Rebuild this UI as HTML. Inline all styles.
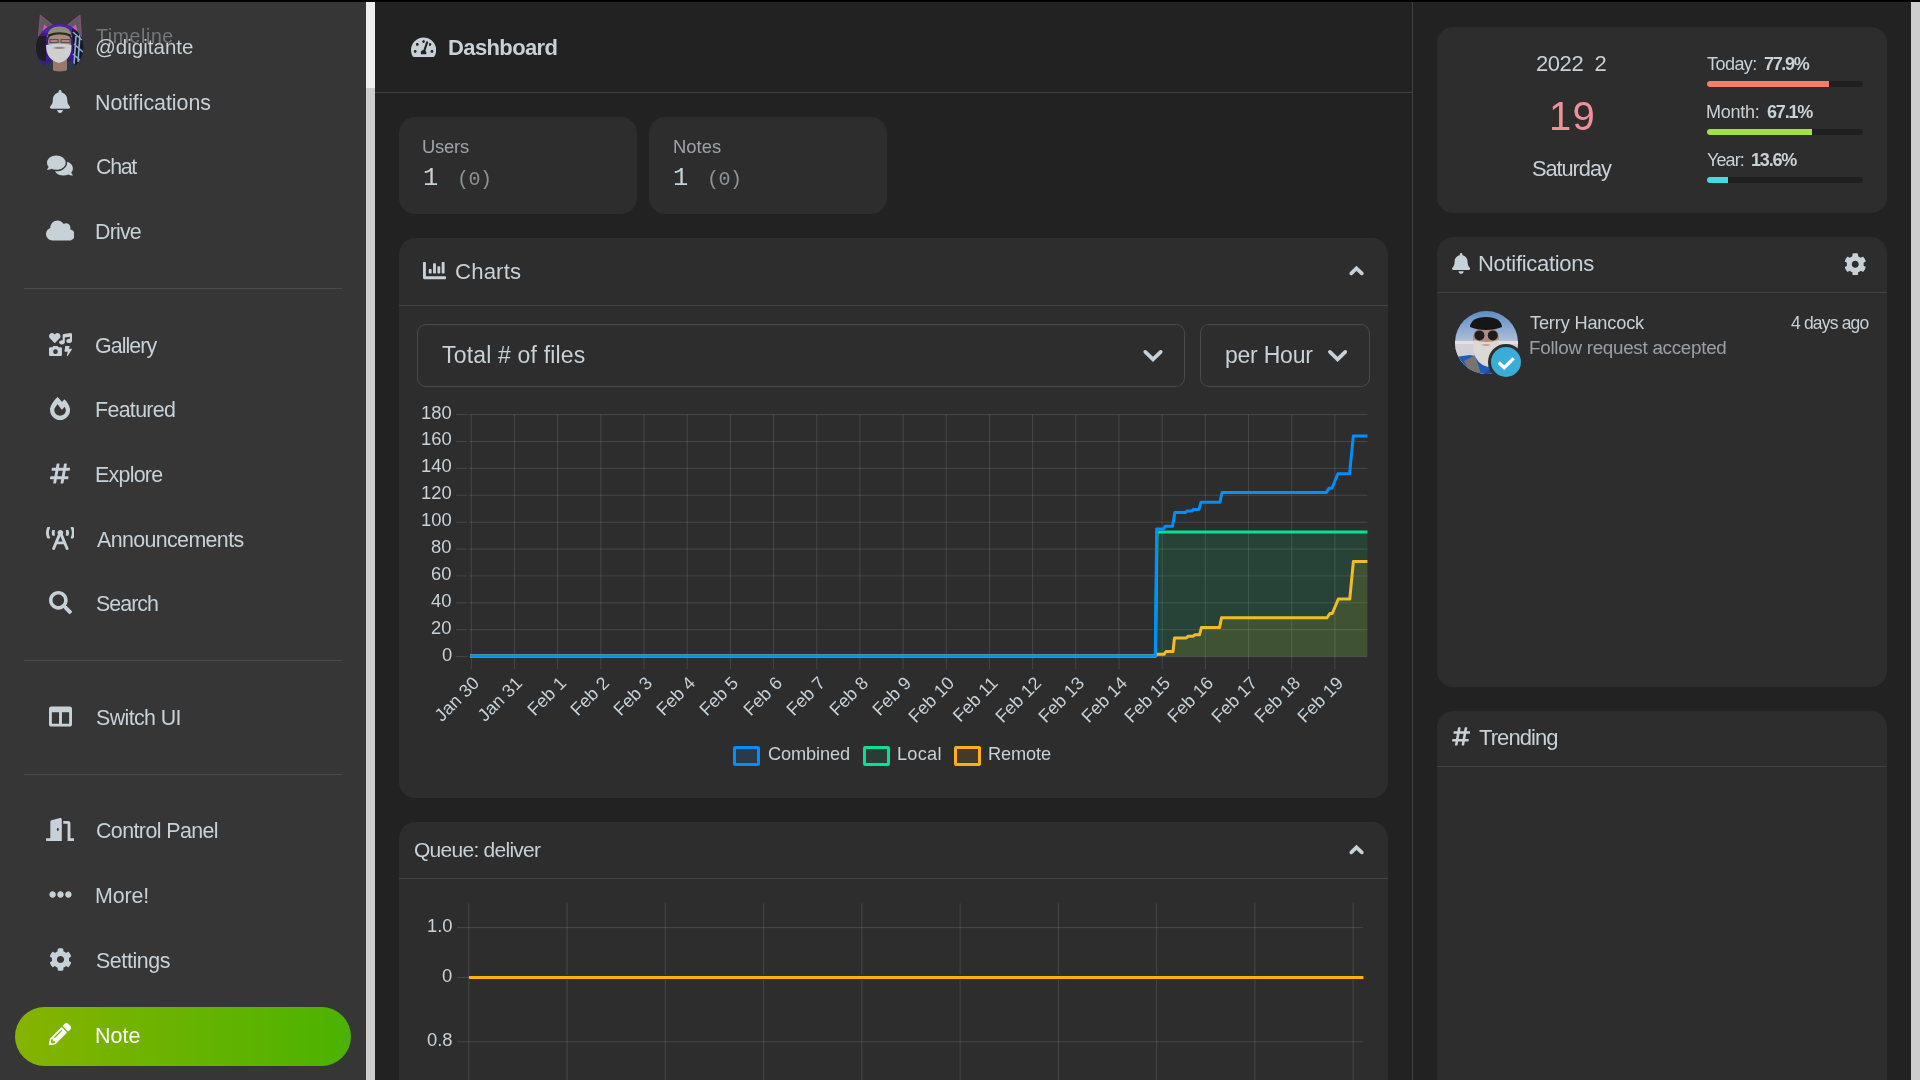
<!DOCTYPE html>
<html><head><meta charset="utf-8">
<style>
*{box-sizing:border-box;margin:0;padding:0}
html,body{width:1920px;height:1080px;overflow:hidden;background:#222;font-family:"Liberation Sans",sans-serif;color:#c7d1d8}
.tx{position:absolute;white-space:nowrap;will-change:transform}
.rx{position:absolute;white-space:nowrap}
.r{position:absolute}
</style></head><body>

<div class="r" style="left:0;top:0;width:366px;height:1080px;background:#363636"></div>
<div class="r" style="left:375px;top:0;width:1545px;height:1080px;background:#222222"></div>
<div class="tx" style="left:96.22px;top:25px;font-size:19.50px;line-height:22px;color:rgba(199,209,216,0.42);font-weight:normal;letter-spacing:0.607px;font-family:'Liberation Sans',sans-serif;">Timeline</div>
<svg class="ic" style="position:absolute;left:49.94px;top:89.90px;width:20.12px;height:23.00px;" viewBox="0 0 448 512"><path fill="#c7d1d8" d="M224 512c35.32 0 63.97-28.65 63.97-64H160.03c0 35.35 28.65 64 63.97 64zm215.39-149.71c-19.32-20.76-55.47-51.99-55.47-154.29 0-77.7-54.48-139.9-127.94-155.16V32c0-17.67-14.32-32-31.98-32s-31.98 14.33-31.98 32v20.84C118.56 68.1 64.08 130.3 64.08 208c0 102.3-36.15 133.53-55.470 154.29-6 6.45-8.66 14.16-8.61 21.71.11 16.4 12.98 32 32.1 32h383.8c19.12 0 32-15.6 32.1-32 .05-7.55-2.61-15.27-8.61-21.710z"/></svg>
<div class="tx" style="left:94.95px;top:91px;font-size:21.40px;line-height:24px;color:#c7d1d8;font-weight:normal;letter-spacing:-0.048px;font-family:'Liberation Sans',sans-serif;">Notifications</div>
<svg class="ic" style="position:absolute;left:47.06px;top:154.20px;width:25.88px;height:23.00px;" viewBox="0 0 576 512"><path fill="#c7d1d8" d="M416 192c0-88.4-93.1-160-208-160S0 103.6 0 192c0 34.3 14.1 65.9 38 92-13.4 30.2-35.5 54.2-35.8 54.5-2.2 2.3-2.8 5.7-1.5 8.7S4.8 352 8 352c36.6 0 66.9-12.3 88.7-25 32.2 15.7 70.3 25 111.3 25 114.9 0 208-71.6 208-160zm122 220c23.9-26 38-57.7 38-92 0-66.9-53.5-124.2-129.3-148.1.9 6.6 1.3 13.3 1.3 20.1 0 105.9-107.7 192-240 192-10.8 0-21.3-.8-31.7-1.9C207.8 439.6 281.8 480 368 480c41 0 79.1-9.2 111.3-25 21.8 12.7 52.1 25 88.7 25 3.2 0 6.1-1.9 7.3-4.8 1.3-2.9.7-6.3-1.5-8.7-.3-.3-22.4-24.2-35.8-54.5z"/></svg>
<div class="tx" style="left:95.88px;top:155px;font-size:21.40px;line-height:24px;color:#c7d1d8;font-weight:normal;letter-spacing:-1.292px;font-family:'Liberation Sans',sans-serif;">Chat</div>
<svg class="ic" style="position:absolute;left:45.62px;top:218.90px;width:28.75px;height:23.00px;" viewBox="0 0 640 512"><path fill="#c7d1d8" d="M537.6 226.6c4.1-10.7 6.4-22.4 6.4-34.6 0-53-43-96-96-96-19.7 0-38.1 6-53.3 16.2C367 64.2 315.3 32 256 32c-88.4 0-160 71.6-160 160 0 2.7.1 5.4.2 8.1C40.2 219.8 0 273.2 0 336c0 79.5 64.5 144 144 144h368c70.7 0 128-57.3 128-128 0-61.9-44-113.6-102.4-125.4z"/></svg>
<div class="tx" style="left:95.25px;top:220px;font-size:21.40px;line-height:24px;color:#c7d1d8;font-weight:normal;letter-spacing:-0.812px;font-family:'Liberation Sans',sans-serif;">Drive</div>
<svg class="ic" style="position:absolute;left:48.50px;top:333.20px;width:23.00px;height:23.00px;" viewBox="0 0 512 512"><path fill="#c7d1d8" d="M116.65 219.35a15.68 15.68 0 0 0 22.65 0l96.75-99.83c28.15-29 26.5-77.1-4.91-103.88C203.75-7.7 163-3.5 137.86 22.44L128 32.58l-9.85-10.14C93.05-3.5 52.25-7.7 24.75 15.64c-31.41 26.78-33 74.85-5 103.88zm143.92 100.49h-48l-7.08-14.24a27.39 27.39 0 0 0-25.66-17.78h-71.71a27.39 27.39 0 0 0-25.66 17.78l-7 14.24h-48A27.45 27.45 0 0 0 0 347.3v137.25A27.44 27.44 0 0 0 27.43 512h233.14A27.45 27.45 0 0 0 288 484.55V347.3a27.45 27.45 0 0 0-27.43-27.46zM144 468a52 52 0 1 1 52-52 52 52 0 0 1-52 52zm355.4-115.9h-60.58l22.36-50.75c2.1-6.65-3.93-13.21-12.18-13.21h-75.59c-6.3 0-11.66 3.9-12.5 9.1l-16.8 106.930c-1 6.3 4.88 11.89 12.5 11.89h62.31l-24.2 83c-1.89 6.65 4.2 12.9 12.23 12.9a13.26 13.26 0 0 0 10.92-5.25l92.4-138.91c4.88-6.91-1.16-15.7-10.87-15.7zM478.08.33L329.51 23.17C314.87 25.42 304 38.92 304 54.83V161.6a83.25 83.25 0 0 0-16-1.7c-35.35 0-64 21.48-64 48s28.65 48 64 48c35.2 0 63.73-21.32 64-47.66V99.66l112-17.22v47.18a83.25 83.25 0 0 0-16-1.7c-35.35 0-64 21.48-64 48s28.65 48 64 48c35.2 0 63.73-21.32 64-47.66V32c0-19.48-16-34.42-33.92-31.67z"/></svg>
<div class="tx" style="left:95.30px;top:334px;font-size:21.40px;line-height:24px;color:#c7d1d8;font-weight:normal;letter-spacing:-0.921px;font-family:'Liberation Sans',sans-serif;">Gallery</div>
<svg class="ic" style="position:absolute;left:49.94px;top:397.20px;width:20.12px;height:23.00px;" viewBox="0 0 448 512"><path fill="#c7d1d8" d="M323.56 51.2c-20.8 19.3-39.58 39.59-56.22 59.97C240.08 73.62 206.28 35.53 168 0 69.74 91.17 0 209.96 0 281.6 0 408.85 100.29 512 224 512s224-103.15 224-230.4c0-53.27-51.98-163.14-124.44-230.4zm-19.47 340.65C282.43 407.01 255.72 416 226.86 416 154.71 416 96 368.26 96 290.75c0-38.61 24.31-72.63 72.79-130.75 6.93 7.98 98.83 125.34 98.83 125.34l58.63-66.88c4.14 6.85 7.91 13.55 11.27 19.97 27.35 52.19 15.81 118.97-33.43 153.42z"/></svg>
<div class="tx" style="left:94.95px;top:398px;font-size:21.40px;line-height:24px;color:#c7d1d8;font-weight:normal;letter-spacing:-0.668px;font-family:'Liberation Sans',sans-serif;">Featured</div>
<svg class="ic" style="position:absolute;left:49.94px;top:461.90px;width:20.12px;height:23.00px;" viewBox="0 0 448 512"><path fill="#c7d1d8" d="M440.667 182.109l7.143-40c1.313-7.355-4.342-14.109-11.813-14.109h-74.81l14.61-81.891C377.109 38.754 371.453 32 363.983 32h-40.632a12 12 0 0 0-11.813 9.891L296.175 128H197.54l14.61-81.891C213.463 38.754 207.807 32 200.336 32h-40.632a12 12 0 0 0-11.813 9.891L132.528 128H53.432a12 12 0 0 0-11.813 9.891l-7.143 40C33.163 185.246 38.818 192 46.289 192h74.81L98.242 320H19.146a12 12 0 0 0-11.813 9.891l-7.143 40C-1.123 377.246 4.532 384 12.003 384h74.81L72.203 465.891C70.89 473.246 76.546 480 84.016 480h40.632a12 12 0 0 0 11.813-9.891L151.825 384h98.634l-14.61 81.891C234.537 473.246 240.193 480 247.663 480h40.632a12 12 0 0 0 11.813-9.891L315.472 384h79.096a12 12 0 0 0 11.813-9.891l7.143-40c1.313-7.355-4.342-14.109-11.813-14.109h-74.81l22.857-128h79.096a12 12 0 0 0 11.813-9.891zM261.889 320h-98.634l22.857-128h98.634l-22.857 128z"/></svg>
<div class="tx" style="left:94.95px;top:463px;font-size:21.40px;line-height:24px;color:#c7d1d8;font-weight:normal;letter-spacing:-0.729px;font-family:'Liberation Sans',sans-serif;">Explore</div>
<svg class="ic" style="position:absolute;left:45.62px;top:526.80px;width:28.75px;height:23.00px;" viewBox="0 0 640 512"><path fill="#c7d1d8" d="M150.94 192h33.730c11.01 0 18.61-10.83 14.86-21.18-4.93-13.58-7.55-27.98-7.55-42.82s2.62-29.24 7.55-42.82C203.29 74.83 195.68 64 184.67 64h-33.73c-7.01 0-13.46 4.49-15.41 11.23C130.64 92.21 128 109.88 128 128c0 18.12 2.64 35.79 7.54 52.76 1.94 6.74 8.39 11.24 15.4 11.24zM89.92 23.34C95.56 12.72 87.970 0 75.96 0H40.63c-6.27 0-12.14 3.59-14.74 9.31C9.4 45.54 0 85.65 0 128c0 24.75 3.12 68.33 26.69 118.86 2.62 5.63 8.42 9.14 14.61 9.14h34.84c12.02 0 19.61-12.74 13.95-23.37-49.78-93.32-16.71-178.15-.17-209.29zM614.06 9.29C611.46 3.58 605.6 0 599.33 0h-35.42c-11.98 0-19.66 12.66-14.02 23.25 18.27 34.29 48.42 119.42.28 209.23-5.72 10.68 1.8 23.52 13.91 23.52h35.23c6.27 0 12.13-3.58 14.73-9.29C630.57 210.48 640 170.36 640 128s-9.42-82.48-25.940-118.71zM489.06 64h-33.73c-11.01 0-18.61 10.83-14.86 21.18 4.93 13.58 7.55 27.98 7.550 42.82s-2.62 29.24-7.55 42.82c-3.76 10.35 3.85 21.18 14.86 21.18h33.73c7.02 0 13.46-4.49 15.41-11.24 4.9-16.97 7.53-34.64 7.53-52.76 0-18.12-2.64-35.79-7.54-52.76-1.94-6.75-8.39-11.24-15.4-11.24zm-116.3 100.12c7.05-10.29 11.2-22.71 11.2-36.12 0-35.35-28.63-64-63.96-64-35.32 0-63.96 28.65-63.96 64 0 13.41 4.15 25.83 11.2 36.12l-130.5 313.41c-3.4 8.15.46 17.52 8.61 20.92l29.51 12.31c8.15 3.4 17.52-.46 20.91-8.61L244.96 384h150.07l49.2 118.15c3.4 8.16 12.76 12.01 20.91 8.61l29.51-12.31c8.15-3.4 12-12.77 8.61-20.92l-130.5-313.41zM271.62 320L320 203.81 368.38 320h-96.76z"/></svg>
<div class="tx" style="left:96.70px;top:528px;font-size:21.40px;line-height:24px;color:#c7d1d8;font-weight:normal;letter-spacing:-0.619px;font-family:'Liberation Sans',sans-serif;">Announcements</div>
<svg class="ic" style="position:absolute;left:48.50px;top:590.90px;width:23.00px;height:23.00px;" viewBox="0 0 512 512"><path fill="#c7d1d8" d="M505 442.7L405.3 343c-4.5-4.5-10.6-7-17-7H372c27.6-35.3 44-79.7 44-128C416 93.1 322.9 0 208 0S0 93.1 0 208s93.1 208 208 208c48.3 0 92.7-16.4 128-44v16.3c0 6.4 2.5 12.5 7 17l99.7 99.7c9.4 9.4 24.6 9.4 33.9 0l28.3-28.3c9.4-9.4 9.4-24.6.1-34zM208 336c-70.7 0-128-57.2-128-128 0-70.7 57.2-128 128-128 70.7 0 128 57.2 128 128 0 70.7-57.2 128-128 128z"/></svg>
<div class="tx" style="left:95.70px;top:592px;font-size:21.40px;line-height:24px;color:#c7d1d8;font-weight:normal;letter-spacing:-0.955px;font-family:'Liberation Sans',sans-serif;">Search</div>
<svg class="ic" style="position:absolute;left:48.50px;top:705.10px;width:23.00px;height:23.00px;" viewBox="0 0 512 512"><path fill="#c7d1d8" d="M464 32H48C21.49 32 0 53.49 0 80v352c0 26.51 21.49 48 48 48h416c26.51 0 48-21.49 48-48V80c0-26.51-21.49-48-48-48zM224 416H64V160h160v256zm224 0H288V160h160v256z"/></svg>
<div class="tx" style="left:95.70px;top:706px;font-size:21.40px;line-height:24px;color:#c7d1d8;font-weight:normal;letter-spacing:-0.597px;font-family:'Liberation Sans',sans-serif;">Switch UI</div>
<svg class="ic" style="position:absolute;left:45.62px;top:818.10px;width:28.75px;height:23.00px;" viewBox="0 0 640 512"><path fill="#c7d1d8" d="M624 448h-80V113.45C544 86.19 522.47 64 496 64H384v64h96v384h144c8.84 0 16-7.16 16-16v-32c0-8.84-7.16-16-16-16zM312.24 1.01l-192 49.74C105.99 54.44 96 67.7 96 82.92V448H16c-8.84 0-16 7.16-16 16v32c0 8.84 7.16 16 16 16h336V33.18c0-21.58-19.56-37.41-39.76-32.17zM264 288c-13.25 0-24-14.33-24-32s10.75-32 24-32 24 14.33 24 32-10.75 32-24 32z"/></svg>
<div class="tx" style="left:95.58px;top:819px;font-size:21.40px;line-height:24px;color:#c7d1d8;font-weight:normal;letter-spacing:-0.583px;font-family:'Liberation Sans',sans-serif;">Control Panel</div>
<svg class="ic" style="position:absolute;left:48.50px;top:882.80px;width:23.00px;height:23.00px;" viewBox="0 0 512 512"><path fill="#c7d1d8" d="M328 256c0 39.8-32.2 72-72 72s-72-32.2-72-72 32.2-72 72-72 72 32.2 72 72zm104-72c-39.8 0-72 32.2-72 72s32.2 72 72 72 72-32.2 72-72-32.2-72-72-72zm-352 0c-39.8 0-72 32.2-72 72s32.2 72 72 72 72-32.2 72-72-32.2-72-72-72z"/></svg>
<div class="tx" style="left:94.95px;top:884px;font-size:21.40px;line-height:24px;color:#c7d1d8;font-weight:normal;letter-spacing:-0.100px;font-family:'Liberation Sans',sans-serif;">More!</div>
<svg class="ic" style="position:absolute;left:48.50px;top:947.90px;width:23.00px;height:23.00px;" viewBox="0 0 512 512"><path fill="#c7d1d8" d="M487.4 315.7l-42.6-24.6c4.3-23.2 4.3-47 0-70.2l42.6-24.6c4.9-2.8 7.1-8.6 5.5-14-11.1-35.6-30-67.8-54.7-94.6-3.8-4.1-10-5.1-14.8-2.3L380.8 110c-17.9-15.4-38.5-27.3-60.8-35.1V25.8c0-5.6-3.9-10.5-9.4-11.7-36.7-8.2-74.3-7.8-109.2 0-5.5 1.2-9.4 6.1-9.4 11.7V75c-22.2 7.9-42.8 19.8-60.8 35.1L88.7 85.5c-4.9-2.8-11-1.9-14.8 2.3-24.7 26.7-43.6 58.9-54.7 94.6-1.7 5.4.6 11.2 5.5 14L67.3 221c-4.3 23.2-4.3 47 0 70.2l-42.6 24.6c-4.9 2.8-7.1 8.6-5.5 14 11.1 35.6 30 67.8 54.7 94.6 3.8 4.1 10 5.1 14.8 2.3l42.6-24.6c17.9 15.4 38.5 27.3 60.8 35.1v49.2c0 5.6 3.9 10.5 9.4 11.7 36.7 8.2 74.3 7.8 109.2 0 5.5-1.2 9.4-6.1 9.4-11.7v-49.2c22.2-7.9 42.8-19.8 60.8-35.1l42.6 24.6c4.9 2.8 11 1.9 14.8-2.3 24.7-26.7 43.6-58.9 54.7-94.6 1.5-5.5-.7-11.3-5.6-14.1zM256 336c-44.1 0-80-35.9-80-80s35.9-80 80-80 80 35.9 80 80-35.9 80-80 80z"/></svg>
<div class="tx" style="left:95.70px;top:949px;font-size:21.40px;line-height:24px;color:#c7d1d8;font-weight:normal;letter-spacing:-0.396px;font-family:'Liberation Sans',sans-serif;">Settings</div>
<div class="r" style="left:24px;top:288px;width:318px;height:1px;background:#4a4a4a"></div>
<div class="r" style="left:24px;top:660px;width:318px;height:1px;background:#4a4a4a"></div>
<div class="r" style="left:24px;top:774px;width:318px;height:1px;background:#4a4a4a"></div>
<div class="r" style="left:15px;top:1007px;width:336px;height:59px;border-radius:30px;background:linear-gradient(90deg,#86b300,#4ab300)"></div>
<svg class="ic" style="position:absolute;left:48.75px;top:1022.90px;width:22.20px;height:22.20px;" viewBox="0 0 512 512"><path fill="#ffffff" d="M497.9 142.1l-46.1 46.1c-4.7 4.7-12.3 4.7-17 0l-111-111c-4.7-4.7-4.7-12.3 0-17l46.1-46.1c18.7-18.7 49.1-18.7 67.9 0l60.1 60.1c18.8 18.7 18.8 49.1 0 67.9zM284.2 99.8L21.6 362.4.4 483.9c-2.9 16.4 11.4 30.6 27.8 27.8l121.5-21.3 262.6-262.6c4.7-4.7 4.7-12.3 0-17l-111-111c-4.8-4.7-12.4-4.7-17.1 0zM124.1 339.9c-5.5-5.5-5.5-14.3 0-19.8l154-154c5.5-5.5 14.3-5.5 19.8 0s5.5 14.3 0 19.8l-154 154c-5.5 5.5-14.3 5.5-19.8 0zM88 424h48v36.3l-64.5 11.3-31.1-31.1L51.7 376H88v48z"/></svg>
<div class="tx" style="left:94.95px;top:1024px;font-size:21.40px;line-height:24px;color:#ffffff;font-weight:normal;letter-spacing:0.033px;font-family:'Liberation Sans',sans-serif;">Note</div>
<svg class="r" style="left:0;top:0;width:120px;height:90px" viewBox="0 0 120 90"><path d="M38.4 36.3 L40.3 14.9 L52.6 25 Z" fill="#5e5a62" stroke="#b85088" stroke-width=".6"/><path d="M81.5 36.3 L80 14.9 L67.4 25 Z" fill="#5e5a62" stroke="#b85088" stroke-width=".6"/><path d="M42.5 31 L44.2 24.5 L48.5 28 Z" fill="#e0559a"/><path d="M77.5 31 L75.8 24.5 L71.5 28 Z" fill="#e0559a"/></svg>
<svg class="r" style="left:36.2px;top:24px;width:47.5px;height:47.5px;filter:blur(.35px)" viewBox="0 0 47.5 47.5"><defs><clipPath id="ca"><circle cx="23.75" cy="23.75" r="23.75"/></clipPath></defs><g clip-path="url(#ca)"><rect width="47.5" height="47.5" fill="#3c1a88"/><rect x="0" y="0" width="47.5" height="9" fill="#4c22a8"/><path d="M0 12 L10 12 L10 38 L0 34 Z" fill="#1e1e22"/><path d="M36 5 L47.5 10 L47.5 42 L38 44 Z" fill="#161a26"/><path d="M37 8 L46 16 M38 20 L47 28 M37 30 L46 38 M40 12 L38 40 M44 10 L42 38" stroke="#88aad0" stroke-width="1.6"/><path d="M0 42 L6 47.5 L0 47.5 Z" fill="#2a2a50"/><path d="M5 47.5 Q8 38 18 37 L32 37 Q40 38 43 47.5 Z" fill="#2a3848"/><rect x="17" y="35" width="14" height="13" fill="#9c7868"/><ellipse cx="23.5" cy="18" rx="11.5" ry="10" fill="#b08878"/><path d="M11 13 Q12 2 23.5 2.5 Q35 2 36 13 Q23.5 9 11 13 Z" fill="#8c8c78"/><path d="M12 13 Q23.5 7.5 35 13 L35 10.5 Q23.5 6 12 10.5 Z" fill="#2a2a22"/><path d="M14 15.5 L22 15.5 L22 18.5 L14 18.5 Z M25 15.5 L34 15.5 L34 18.5 L25 18.5 Z" fill="none" stroke="#50506a" stroke-width="1.2"/><path d="M10 21 Q23.5 18 35.5 21 Q36 36 23 39 Q10 36 10 21 Z" fill="#cfcfcf"/><path d="M17 24 Q23.5 21.5 30 24 Q23.5 26 17 24 Z" fill="#a08478"/></g></svg>
<div class="tx" style="left:94.88px;top:35px;font-size:20.50px;line-height:23px;color:#c7d1d8;font-weight:normal;letter-spacing:0.017px;font-family:'Liberation Sans',sans-serif;">@digitante</div>
<div class="r" style="left:366px;top:2px;width:9px;height:1078px;background:#cdcdcd"></div>
<div class="r" style="left:366px;top:2px;width:9px;height:86px;background:#efefef"></div>
<div class="r" style="left:375px;top:92px;width:1037px;height:1px;background:#424242"></div>
<svg class="ic" style="position:absolute;left:410.80px;top:36.30px;width:25.20px;height:22.40px;" viewBox="0 0 576 512"><path fill="#c7d1d8" d="M288 32C128.94 32 0 160.94 0 320c0 52.8 14.25 102.26 39.06 144.8 5.61 9.62 16.3 15.2 27.44 15.2h443c11.14 0 21.830-5.58 27.44-15.2C561.75 422.26 576 372.8 576 320c0-159.06-128.94-288-288-288zm0 64c14.71 0 26.58 10.13 30.32 23.65-1.11 2.26-2.64 4.23-3.45 6.67l-9.22 27.67c-5.13 3.49-10.97 6.01-17.64 6.01-17.67 0-32-14.33-32-32S270.33 96 288 96zM96 384c-17.67 0-32-14.33-32-32s14.33-32 32-32 32 14.33 32 32-14.33 32-32 32zm48-160c-17.67 0-32-14.33-32-32s14.33-32 32-32 32 14.33 32 32-14.33 32-32 32zm246.77-72.41l-61.33 184C343.13 347.33 352 364.54 352 384c0 11.72-3.38 22.55-8.88 32H232.88c-5.5-9.45-8.88-20.28-8.88-32 0-33.94 26.5-61.43 59.9-63.59l61.34-184.01c4.17-12.56 17.73-19.45 30.36-15.17 12.57 4.19 19.35 17.790 15.17 30.36zm14.66 57.2l15.52-46.55c3.47-1.29 7.13-2.23 11.05-2.23 17.67 0 32 14.33 32 32s-14.33 32-32 32c-11.38 0-20.89-6.3-26.57-15.22zM480 384c-17.67 0-32-14.33-32-32s14.33-32 32-32 32 14.33 32 32-14.33 32-32 32z"/></svg>
<div class="tx" style="left:447.70px;top:35px;font-size:22.00px;line-height:25px;color:#c7d1d8;font-weight:bold;letter-spacing:-0.613px;font-family:'Liberation Sans',sans-serif;">Dashboard</div>
<div class="r" style="left:399px;top:117px;width:238px;height:97px;border-radius:16px;background:#2d2d2d"></div>
<div class="tx" style="left:421.93px;top:136px;font-size:18.40px;line-height:21px;color:rgba(199,209,216,0.72);font-weight:normal;letter-spacing:-0.219px;font-family:'Liberation Sans',sans-serif;">Users</div>
<div class="tx" style="left:423.12px;top:164px;font-size:25.50px;line-height:29px;color:#c7d1d8;font-weight:normal;letter-spacing:-0.250px;font-family:'Liberation Mono',monospace;">1</div>
<div class="tx" style="left:457.23px;top:168px;font-size:20.00px;line-height:23px;color:rgba(199,209,216,0.62);font-weight:normal;letter-spacing:-0.475px;font-family:'Liberation Mono',monospace;">(0)</div>
<div class="r" style="left:649px;top:117px;width:238px;height:97px;border-radius:16px;background:#2d2d2d"></div>
<div class="tx" style="left:672.50px;top:136px;font-size:18.40px;line-height:21px;color:rgba(199,209,216,0.72);font-weight:normal;letter-spacing:0.031px;font-family:'Liberation Sans',sans-serif;">Notes</div>
<div class="tx" style="left:673.12px;top:164px;font-size:25.50px;line-height:29px;color:#c7d1d8;font-weight:normal;letter-spacing:-0.250px;font-family:'Liberation Mono',monospace;">1</div>
<div class="tx" style="left:707.23px;top:168px;font-size:20.00px;line-height:23px;color:rgba(199,209,216,0.62);font-weight:normal;letter-spacing:-0.475px;font-family:'Liberation Mono',monospace;">(0)</div>
<div class="r" style="left:399px;top:238px;width:989px;height:560px;border-radius:16px;background:#2d2d2d"></div>
<div class="r" style="left:399px;top:305px;width:989px;height:1px;background:#424242"></div>
<svg class="ic" style="position:absolute;left:422.60px;top:259.00px;width:23.00px;height:23.00px;" viewBox="0 0 512 512"><path fill="#c7d1d8" d="M332.8 320h38.4c6.4 0 12.8-6.4 12.8-12.8V172.8c0-6.4-6.4-12.8-12.8-12.8h-38.4c-6.4 0-12.8 6.4-12.8 12.8v134.4c0 6.4 6.4 12.8 12.8 12.8zm96 0h38.4c6.4 0 12.8-6.4 12.8-12.8V76.8c0-6.4-6.4-12.8-12.8-12.8h-38.4c-6.4 0-12.8 6.4-12.8 12.8v230.4c0 6.4 6.4 12.8 12.8 12.8zm-288 0h38.4c6.4 0 12.8-6.4 12.8-12.8v-70.4c0-6.4-6.4-12.8-12.8-12.8h-38.4c-6.4 0-12.8 6.4-12.8 12.8v70.4c0 6.4 6.4 12.8 12.8 12.8zm96 0h38.4c6.4 0 12.8-6.4 12.8-12.8V108.8c0-6.4-6.4-12.8-12.8-12.8h-38.4c-6.4 0-12.8 6.4-12.8 12.8v198.4c0 6.4 6.4 12.8 12.8 12.8zM496 384H64V80c0-8.84-7.16-16-16-16H16C7.16 64 0 71.16 0 80v336c0 17.67 14.33 32 32 32h464c8.84 0 16-7.16 16-16v-32c0-8.84-7.16-16-16-16z"/></svg>
<div class="tx" style="left:454.57px;top:259px;font-size:22.20px;line-height:25px;color:#c7d1d8;font-weight:normal;letter-spacing:0.135px;font-family:'Liberation Sans',sans-serif;">Charts</div>
<svg class="r" style="left:0;top:0;width:1920px;height:1080px;pointer-events:none" viewBox="0 0 1920 1080"><polyline points="1351.3,273.4 1356.45,268.4 1361.8,273.4" fill="none" stroke="#c7d1d8" stroke-width="3.70" stroke-linecap="round" stroke-linejoin="miter"/></svg>
<div class="r" style="left:417px;top:324px;width:768px;height:63px;border-radius:9px;border:1px solid #4a4a4a"></div>
<div class="r" style="left:1200px;top:324px;width:170px;height:63px;border-radius:9px;border:1px solid #4a4a4a"></div>
<div class="tx" style="left:441.80px;top:342px;font-size:23.00px;line-height:26px;color:#c7d1d8;font-weight:normal;letter-spacing:0.177px;font-family:'Liberation Sans',sans-serif;">Total # of files</div>
<div class="tx" style="left:1224.50px;top:342px;font-size:23.00px;line-height:26px;color:#c7d1d8;font-weight:normal;letter-spacing:-0.232px;font-family:'Liberation Sans',sans-serif;">per Hour</div>
<svg class="r" style="left:0;top:0;width:1920px;height:1080px;pointer-events:none" viewBox="0 0 1920 1080"><polyline points="1145.3,351.9 1153,359.4 1160.7,351.9" fill="none" stroke="#c7d1d8" stroke-width="3.75" stroke-linecap="round" stroke-linejoin="miter"/></svg>
<svg class="r" style="left:0;top:0;width:1920px;height:1080px;pointer-events:none" viewBox="0 0 1920 1080"><polyline points="1329.9,351.9 1337.6,359.4 1345.3,351.9" fill="none" stroke="#c7d1d8" stroke-width="3.75" stroke-linecap="round" stroke-linejoin="miter"/></svg>
<div class="tx" style="left:421.00px;top:402px;font-size:18.40px;line-height:21px;color:#c7d1d8;font-weight:normal;letter-spacing:0.000px;font-family:'Liberation Sans',sans-serif;">180</div>
<div class="tx" style="left:421.00px;top:428px;font-size:18.40px;line-height:21px;color:#c7d1d8;font-weight:normal;letter-spacing:0.000px;font-family:'Liberation Sans',sans-serif;">160</div>
<div class="tx" style="left:421.00px;top:455px;font-size:18.40px;line-height:21px;color:#c7d1d8;font-weight:normal;letter-spacing:0.000px;font-family:'Liberation Sans',sans-serif;">140</div>
<div class="tx" style="left:421.00px;top:482px;font-size:18.40px;line-height:21px;color:#c7d1d8;font-weight:normal;letter-spacing:0.000px;font-family:'Liberation Sans',sans-serif;">120</div>
<div class="tx" style="left:421.00px;top:509px;font-size:18.40px;line-height:21px;color:#c7d1d8;font-weight:normal;letter-spacing:0.000px;font-family:'Liberation Sans',sans-serif;">100</div>
<div class="tx" style="left:431.25px;top:536px;font-size:18.40px;line-height:21px;color:#c7d1d8;font-weight:normal;letter-spacing:0.000px;font-family:'Liberation Sans',sans-serif;">80</div>
<div class="tx" style="left:431.25px;top:563px;font-size:18.40px;line-height:21px;color:#c7d1d8;font-weight:normal;letter-spacing:0.000px;font-family:'Liberation Sans',sans-serif;">60</div>
<div class="tx" style="left:431.25px;top:590px;font-size:18.40px;line-height:21px;color:#c7d1d8;font-weight:normal;letter-spacing:0.000px;font-family:'Liberation Sans',sans-serif;">40</div>
<div class="tx" style="left:431.25px;top:617px;font-size:18.40px;line-height:21px;color:#c7d1d8;font-weight:normal;letter-spacing:0.000px;font-family:'Liberation Sans',sans-serif;">20</div>
<div class="tx" style="left:441.50px;top:644px;font-size:18.40px;line-height:21px;color:#c7d1d8;font-weight:normal;letter-spacing:0.000px;font-family:'Liberation Sans',sans-serif;">0</div>
<div class="rx" style="right:1443.70px;top:671.00px;font-size:18px;line-height:18px;color:#c7d1d8;transform-origin:100% 50%;transform:rotate(-45deg)">Jan 30</div>
<div class="rx" style="right:1400.52px;top:671.00px;font-size:18px;line-height:18px;color:#c7d1d8;transform-origin:100% 50%;transform:rotate(-45deg)">Jan 31</div>
<div class="rx" style="right:1357.34px;top:671.00px;font-size:18px;line-height:18px;color:#c7d1d8;transform-origin:100% 50%;transform:rotate(-45deg)">Feb 1</div>
<div class="rx" style="right:1314.16px;top:671.00px;font-size:18px;line-height:18px;color:#c7d1d8;transform-origin:100% 50%;transform:rotate(-45deg)">Feb 2</div>
<div class="rx" style="right:1270.98px;top:671.00px;font-size:18px;line-height:18px;color:#c7d1d8;transform-origin:100% 50%;transform:rotate(-45deg)">Feb 3</div>
<div class="rx" style="right:1227.80px;top:671.00px;font-size:18px;line-height:18px;color:#c7d1d8;transform-origin:100% 50%;transform:rotate(-45deg)">Feb 4</div>
<div class="rx" style="right:1184.62px;top:671.00px;font-size:18px;line-height:18px;color:#c7d1d8;transform-origin:100% 50%;transform:rotate(-45deg)">Feb 5</div>
<div class="rx" style="right:1141.44px;top:671.00px;font-size:18px;line-height:18px;color:#c7d1d8;transform-origin:100% 50%;transform:rotate(-45deg)">Feb 6</div>
<div class="rx" style="right:1098.26px;top:671.00px;font-size:18px;line-height:18px;color:#c7d1d8;transform-origin:100% 50%;transform:rotate(-45deg)">Feb 7</div>
<div class="rx" style="right:1055.08px;top:671.00px;font-size:18px;line-height:18px;color:#c7d1d8;transform-origin:100% 50%;transform:rotate(-45deg)">Feb 8</div>
<div class="rx" style="right:1011.90px;top:671.00px;font-size:18px;line-height:18px;color:#c7d1d8;transform-origin:100% 50%;transform:rotate(-45deg)">Feb 9</div>
<div class="rx" style="right:968.72px;top:671.00px;font-size:18px;line-height:18px;color:#c7d1d8;transform-origin:100% 50%;transform:rotate(-45deg)">Feb 10</div>
<div class="rx" style="right:925.54px;top:671.00px;font-size:18px;line-height:18px;color:#c7d1d8;transform-origin:100% 50%;transform:rotate(-45deg)">Feb 11</div>
<div class="rx" style="right:882.36px;top:671.00px;font-size:18px;line-height:18px;color:#c7d1d8;transform-origin:100% 50%;transform:rotate(-45deg)">Feb 12</div>
<div class="rx" style="right:839.18px;top:671.00px;font-size:18px;line-height:18px;color:#c7d1d8;transform-origin:100% 50%;transform:rotate(-45deg)">Feb 13</div>
<div class="rx" style="right:796.00px;top:671.00px;font-size:18px;line-height:18px;color:#c7d1d8;transform-origin:100% 50%;transform:rotate(-45deg)">Feb 14</div>
<div class="rx" style="right:752.82px;top:671.00px;font-size:18px;line-height:18px;color:#c7d1d8;transform-origin:100% 50%;transform:rotate(-45deg)">Feb 15</div>
<div class="rx" style="right:709.64px;top:671.00px;font-size:18px;line-height:18px;color:#c7d1d8;transform-origin:100% 50%;transform:rotate(-45deg)">Feb 16</div>
<div class="rx" style="right:666.46px;top:671.00px;font-size:18px;line-height:18px;color:#c7d1d8;transform-origin:100% 50%;transform:rotate(-45deg)">Feb 17</div>
<div class="rx" style="right:623.28px;top:671.00px;font-size:18px;line-height:18px;color:#c7d1d8;transform-origin:100% 50%;transform:rotate(-45deg)">Feb 18</div>
<div class="rx" style="right:580.10px;top:671.00px;font-size:18px;line-height:18px;color:#c7d1d8;transform-origin:100% 50%;transform:rotate(-45deg)">Feb 19</div>
<div class="r" style="left:733.3px;top:745.6px;width:27px;height:20.4px;border:3px solid #008ffb;background:#2b3a48;border-radius:2px"></div>
<div class="tx" style="left:767.88px;top:744px;font-size:18.20px;line-height:20px;color:#c7d1d8;font-weight:normal;letter-spacing:-0.125px;font-family:'Liberation Sans',sans-serif;">Combined</div>
<div class="r" style="left:862.6px;top:745.6px;width:27px;height:20.4px;border:3px solid #00e396;background:#283d35;border-radius:2px"></div>
<div class="tx" style="left:896.50px;top:744px;font-size:18.20px;line-height:20px;color:#c7d1d8;font-weight:normal;letter-spacing:0.250px;font-family:'Liberation Sans',sans-serif;">Local</div>
<div class="r" style="left:953.8px;top:745.6px;width:27px;height:20.4px;border:3px solid #feb019;background:#443a28;border-radius:2px"></div>
<div class="tx" style="left:988.10px;top:744px;font-size:18.20px;line-height:20px;color:#c7d1d8;font-weight:normal;letter-spacing:-0.125px;font-family:'Liberation Sans',sans-serif;">Remote</div>
<div class="r" style="left:399px;top:822px;width:989px;height:300px;border-radius:16px;background:#2d2d2d"></div>
<div class="r" style="left:399px;top:878px;width:989px;height:1px;background:#424242"></div>
<div class="tx" style="left:413.80px;top:838px;font-size:21.00px;line-height:23px;color:#c7d1d8;font-weight:normal;letter-spacing:-0.735px;font-family:'Liberation Sans',sans-serif;">Queue: deliver</div>
<svg class="r" style="left:0;top:0;width:1920px;height:1080px;pointer-events:none" viewBox="0 0 1920 1080"><polyline points="1351.3,852.4 1356.45,847.4 1361.8,852.4" fill="none" stroke="#c7d1d8" stroke-width="3.70" stroke-linecap="round" stroke-linejoin="miter"/></svg>
<div class="tx" style="left:426.82px;top:915px;font-size:18.40px;line-height:21px;color:#c7d1d8;font-weight:normal;letter-spacing:0.000px;font-family:'Liberation Sans',sans-serif;">1.0</div>
<div class="tx" style="left:442.20px;top:965px;font-size:18.40px;line-height:21px;color:#c7d1d8;font-weight:normal;letter-spacing:0.000px;font-family:'Liberation Sans',sans-serif;">0</div>
<div class="tx" style="left:426.95px;top:1029px;font-size:18.40px;line-height:21px;color:#c7d1d8;font-weight:normal;letter-spacing:0.000px;font-family:'Liberation Sans',sans-serif;">0.8</div>
<svg class="r" style="left:0;top:0;width:1920px;height:1080px" viewBox="0 0 1920 1080">
<line x1="456" y1="414.60" x2="467" y2="414.60" stroke="rgba(255,255,255,0.12)" stroke-width="1"/>
<line x1="468.8" y1="414.60" x2="1367.40" y2="414.60" stroke="rgba(255,255,255,0.12)" stroke-width="1"/>
<line x1="456" y1="441.49" x2="467" y2="441.49" stroke="rgba(255,255,255,0.12)" stroke-width="1"/>
<line x1="468.8" y1="441.49" x2="1367.40" y2="441.49" stroke="rgba(255,255,255,0.12)" stroke-width="1"/>
<line x1="456" y1="468.38" x2="467" y2="468.38" stroke="rgba(255,255,255,0.12)" stroke-width="1"/>
<line x1="468.8" y1="468.38" x2="1367.40" y2="468.38" stroke="rgba(255,255,255,0.12)" stroke-width="1"/>
<line x1="456" y1="495.27" x2="467" y2="495.27" stroke="rgba(255,255,255,0.12)" stroke-width="1"/>
<line x1="468.8" y1="495.27" x2="1367.40" y2="495.27" stroke="rgba(255,255,255,0.12)" stroke-width="1"/>
<line x1="456" y1="522.16" x2="467" y2="522.16" stroke="rgba(255,255,255,0.12)" stroke-width="1"/>
<line x1="468.8" y1="522.16" x2="1367.40" y2="522.16" stroke="rgba(255,255,255,0.12)" stroke-width="1"/>
<line x1="456" y1="549.04" x2="467" y2="549.04" stroke="rgba(255,255,255,0.12)" stroke-width="1"/>
<line x1="468.8" y1="549.04" x2="1367.40" y2="549.04" stroke="rgba(255,255,255,0.12)" stroke-width="1"/>
<line x1="456" y1="575.93" x2="467" y2="575.93" stroke="rgba(255,255,255,0.12)" stroke-width="1"/>
<line x1="468.8" y1="575.93" x2="1367.40" y2="575.93" stroke="rgba(255,255,255,0.12)" stroke-width="1"/>
<line x1="456" y1="602.82" x2="467" y2="602.82" stroke="rgba(255,255,255,0.12)" stroke-width="1"/>
<line x1="468.8" y1="602.82" x2="1367.40" y2="602.82" stroke="rgba(255,255,255,0.12)" stroke-width="1"/>
<line x1="456" y1="629.71" x2="467" y2="629.71" stroke="rgba(255,255,255,0.12)" stroke-width="1"/>
<line x1="468.8" y1="629.71" x2="1367.40" y2="629.71" stroke="rgba(255,255,255,0.12)" stroke-width="1"/>
<line x1="456" y1="656.60" x2="467" y2="656.60" stroke="rgba(255,255,255,0.12)" stroke-width="1"/>
<line x1="468.8" y1="656.60" x2="1367.40" y2="656.60" stroke="rgba(255,255,255,0.12)" stroke-width="1"/>
<line x1="471.30" y1="414.60" x2="471.30" y2="669" stroke="rgba(255,255,255,0.12)" stroke-width="1"/>
<line x1="514.48" y1="414.60" x2="514.48" y2="669" stroke="rgba(255,255,255,0.12)" stroke-width="1"/>
<line x1="557.66" y1="414.60" x2="557.66" y2="669" stroke="rgba(255,255,255,0.12)" stroke-width="1"/>
<line x1="600.84" y1="414.60" x2="600.84" y2="669" stroke="rgba(255,255,255,0.12)" stroke-width="1"/>
<line x1="644.02" y1="414.60" x2="644.02" y2="669" stroke="rgba(255,255,255,0.12)" stroke-width="1"/>
<line x1="687.20" y1="414.60" x2="687.20" y2="669" stroke="rgba(255,255,255,0.12)" stroke-width="1"/>
<line x1="730.38" y1="414.60" x2="730.38" y2="669" stroke="rgba(255,255,255,0.12)" stroke-width="1"/>
<line x1="773.56" y1="414.60" x2="773.56" y2="669" stroke="rgba(255,255,255,0.12)" stroke-width="1"/>
<line x1="816.74" y1="414.60" x2="816.74" y2="669" stroke="rgba(255,255,255,0.12)" stroke-width="1"/>
<line x1="859.92" y1="414.60" x2="859.92" y2="669" stroke="rgba(255,255,255,0.12)" stroke-width="1"/>
<line x1="903.10" y1="414.60" x2="903.10" y2="669" stroke="rgba(255,255,255,0.12)" stroke-width="1"/>
<line x1="946.28" y1="414.60" x2="946.28" y2="669" stroke="rgba(255,255,255,0.12)" stroke-width="1"/>
<line x1="989.46" y1="414.60" x2="989.46" y2="669" stroke="rgba(255,255,255,0.12)" stroke-width="1"/>
<line x1="1032.64" y1="414.60" x2="1032.64" y2="669" stroke="rgba(255,255,255,0.12)" stroke-width="1"/>
<line x1="1075.82" y1="414.60" x2="1075.82" y2="669" stroke="rgba(255,255,255,0.12)" stroke-width="1"/>
<line x1="1119.00" y1="414.60" x2="1119.00" y2="669" stroke="rgba(255,255,255,0.12)" stroke-width="1"/>
<line x1="1162.18" y1="414.60" x2="1162.18" y2="669" stroke="rgba(255,255,255,0.12)" stroke-width="1"/>
<line x1="1205.36" y1="414.60" x2="1205.36" y2="669" stroke="rgba(255,255,255,0.12)" stroke-width="1"/>
<line x1="1248.54" y1="414.60" x2="1248.54" y2="669" stroke="rgba(255,255,255,0.12)" stroke-width="1"/>
<line x1="1291.72" y1="414.60" x2="1291.72" y2="669" stroke="rgba(255,255,255,0.12)" stroke-width="1"/>
<line x1="1334.90" y1="414.60" x2="1334.90" y2="669" stroke="rgba(255,255,255,0.12)" stroke-width="1"/>
<polygon points="1157.00,656.60 1157.00,531.90 1367.40,531.90 1367.40,656.60" fill="rgba(0,230,140,0.12)"/>
<polygon points="1157.00,654.30 1164.00,654.30 1166.00,651.50 1173.00,651.50 1174.50,638.00 1186.30,638.00 1188.00,636.20 1193.00,636.20 1195.00,634.80 1199.50,634.80 1201.50,627.40 1219.60,627.40 1221.50,617.80 1326.90,617.80 1329.90,613.50 1332.30,613.50 1338.30,599.00 1349.80,599.00 1353.40,561.40 1367.40,561.40 1367.40,656.60 1157.00,656.60" fill="rgba(250,200,30,0.12)"/>
<polyline points="470.00,656.00 1155.50,656.00 1157.00,531.90 1367.40,531.90" fill="none" stroke="#00e396" stroke-width="3" stroke-linejoin="round"/>
<polyline points="470.00,656.00 1155.50,656.00 1157.00,654.30 1164.00,654.30 1166.00,651.50 1173.00,651.50 1174.50,638.00 1186.30,638.00 1188.00,636.20 1193.00,636.20 1195.00,634.80 1199.50,634.80 1201.50,627.40 1219.60,627.40 1221.50,617.80 1326.90,617.80 1329.90,613.50 1332.30,613.50 1338.30,599.00 1349.80,599.00 1353.40,561.40 1367.40,561.40" fill="none" stroke="#f0bd24" stroke-width="3" stroke-linejoin="round"/>
<polyline points="470.00,656.00 1155.30,656.00 1156.70,528.90 1163.70,528.90 1165.20,526.30 1172.60,526.30 1174.80,512.60 1185.20,512.60 1187.00,511.10 1192.00,511.10 1193.00,509.60 1199.00,509.60 1201.00,502.20 1220.00,502.20 1222.00,492.60 1326.20,492.60 1329.20,488.20 1332.00,488.20 1337.90,473.80 1349.60,473.80 1353.30,436.10 1367.40,436.10" fill="none" stroke="#008ffb" stroke-width="3" stroke-linejoin="round"/>
<line x1="457" y1="927.60" x2="1363.4" y2="927.60" stroke="rgba(255,255,255,0.12)" stroke-width="1"/>
<line x1="457" y1="1041.80" x2="1363.4" y2="1041.80" stroke="rgba(255,255,255,0.12)" stroke-width="1"/>
<line x1="457" y1="977.50" x2="469" y2="977.50" stroke="rgba(255,255,255,0.12)" stroke-width="1"/>
<line x1="468.80" y1="903.3" x2="468.80" y2="1080" stroke="rgba(255,255,255,0.12)" stroke-width="1"/>
<line x1="567.06" y1="903.3" x2="567.06" y2="1080" stroke="rgba(255,255,255,0.12)" stroke-width="1"/>
<line x1="665.32" y1="903.3" x2="665.32" y2="1080" stroke="rgba(255,255,255,0.12)" stroke-width="1"/>
<line x1="763.58" y1="903.3" x2="763.58" y2="1080" stroke="rgba(255,255,255,0.12)" stroke-width="1"/>
<line x1="861.84" y1="903.3" x2="861.84" y2="1080" stroke="rgba(255,255,255,0.12)" stroke-width="1"/>
<line x1="960.10" y1="903.3" x2="960.10" y2="1080" stroke="rgba(255,255,255,0.12)" stroke-width="1"/>
<line x1="1058.36" y1="903.3" x2="1058.36" y2="1080" stroke="rgba(255,255,255,0.12)" stroke-width="1"/>
<line x1="1156.62" y1="903.3" x2="1156.62" y2="1080" stroke="rgba(255,255,255,0.12)" stroke-width="1"/>
<line x1="1254.88" y1="903.3" x2="1254.88" y2="1080" stroke="rgba(255,255,255,0.12)" stroke-width="1"/>
<line x1="1353.14" y1="903.3" x2="1353.14" y2="1080" stroke="rgba(255,255,255,0.12)" stroke-width="1"/>
<line x1="469" y1="977.50" x2="1363.4" y2="977.50" stroke="#1b3060" stroke-width="5"/>
<line x1="469" y1="977.50" x2="1363.4" y2="977.50" stroke="#ffb300" stroke-width="3"/>
</svg>
<div class="r" style="left:1412px;top:0;width:1px;height:1080px;background:#424242"></div>
<div class="r" style="left:1437px;top:27px;width:450px;height:186px;border-radius:16px;background:#2d2d2d"></div>
<div class="tx" style="left:1536.38px;top:51px;font-size:22.00px;line-height:25px;color:#c7d1d8;font-weight:normal;letter-spacing:-0.438px;font-family:'Liberation Sans',sans-serif;">2022&nbsp;&nbsp;2</div>
<div class="tx" style="left:1549.00px;top:94px;font-size:40.00px;line-height:44px;color:#f0909a;font-weight:normal;letter-spacing:1.375px;font-family:'Liberation Sans',sans-serif;">19</div>
<div class="tx" style="left:1531.70px;top:156px;font-size:21.80px;line-height:25px;color:#c7d1d8;font-weight:normal;letter-spacing:-1.057px;font-family:'Liberation Sans',sans-serif;">Saturday</div>
<div class="tx" style="left:1707.12px;top:54px;font-size:18.00px;line-height:20px;color:#c7d1d8;font-weight:normal;letter-spacing:-0.540px;font-family:'Liberation Sans',sans-serif;">Today:</div>
<div class="tx" style="left:1763.85px;top:54px;font-size:18.00px;line-height:20px;color:#c7d1d8;font-weight:bold;letter-spacing:-1.337px;font-family:'Liberation Sans',sans-serif;">77.9%</div>
<div class="r" style="left:1707px;top:81.0px;width:156px;height:6px;border-radius:3px;background:#1f1f1f"></div>
<div class="r" style="left:1707px;top:81.0px;width:122.1px;height:6px;border-radius:3px 0 0 3px;background:#f57d6c"></div>
<div class="tx" style="left:1706.00px;top:102px;font-size:18.00px;line-height:20px;color:#c7d1d8;font-weight:normal;letter-spacing:-0.275px;font-family:'Liberation Sans',sans-serif;">Month:</div>
<div class="tx" style="left:1766.58px;top:102px;font-size:18.00px;line-height:20px;color:#c7d1d8;font-weight:bold;letter-spacing:-1.169px;font-family:'Liberation Sans',sans-serif;">67.1%</div>
<div class="r" style="left:1707px;top:129.3px;width:156px;height:6px;border-radius:3px;background:#1f1f1f"></div>
<div class="r" style="left:1707px;top:129.3px;width:104.9px;height:6px;border-radius:3px 0 0 3px;background:#a3e043"></div>
<div class="tx" style="left:1707.12px;top:150px;font-size:18.00px;line-height:20px;color:#c7d1d8;font-weight:normal;letter-spacing:-0.894px;font-family:'Liberation Sans',sans-serif;">Year:</div>
<div class="tx" style="left:1751.47px;top:150px;font-size:18.00px;line-height:20px;color:#c7d1d8;font-weight:bold;letter-spacing:-1.169px;font-family:'Liberation Sans',sans-serif;">13.6%</div>
<div class="r" style="left:1707px;top:177.2px;width:156px;height:6px;border-radius:3px;background:#1f1f1f"></div>
<div class="r" style="left:1707px;top:177.2px;width:20.9px;height:6px;border-radius:3px 0 0 3px;background:#41ddde"></div>
<div class="r" style="left:1437px;top:237px;width:450px;height:450px;border-radius:16px;background:#2d2d2d"></div>
<div class="r" style="left:1437px;top:292px;width:450px;height:1px;background:#424242"></div>
<svg class="ic" style="position:absolute;left:1451.80px;top:253.20px;width:18.20px;height:20.80px;" viewBox="0 0 448 512"><path fill="#c7d1d8" d="M224 512c35.32 0 63.97-28.65 63.97-64H160.03c0 35.35 28.65 64 63.97 64zm215.39-149.71c-19.32-20.76-55.47-51.99-55.47-154.29 0-77.7-54.48-139.9-127.94-155.16V32c0-17.67-14.32-32-31.98-32s-31.98 14.33-31.98 32v20.84C118.56 68.1 64.08 130.3 64.08 208c0 102.3-36.15 133.53-55.470 154.29-6 6.45-8.66 14.16-8.61 21.71.11 16.4 12.98 32 32.1 32h383.8c19.12 0 32-15.6 32.1-32 .05-7.55-2.61-15.27-8.61-21.710z"/></svg>
<div class="tx" style="left:1477.85px;top:251px;font-size:22.00px;line-height:25px;color:#c7d1d8;font-weight:normal;letter-spacing:-0.306px;font-family:'Liberation Sans',sans-serif;">Notifications</div>
<svg class="ic" style="position:absolute;left:1843.60px;top:252.80px;width:22.50px;height:22.50px;" viewBox="0 0 512 512"><path fill="#c7d1d8" d="M487.4 315.7l-42.6-24.6c4.3-23.2 4.3-47 0-70.2l42.6-24.6c4.9-2.8 7.1-8.6 5.5-14-11.1-35.6-30-67.8-54.7-94.6-3.8-4.1-10-5.1-14.8-2.3L380.8 110c-17.9-15.4-38.5-27.3-60.8-35.1V25.8c0-5.6-3.9-10.5-9.4-11.7-36.7-8.2-74.3-7.8-109.2 0-5.5 1.2-9.4 6.1-9.4 11.7V75c-22.2 7.9-42.8 19.8-60.8 35.1L88.7 85.5c-4.9-2.8-11-1.9-14.8 2.3-24.7 26.7-43.6 58.9-54.7 94.6-1.7 5.4.6 11.2 5.5 14L67.3 221c-4.3 23.2-4.3 47 0 70.2l-42.6 24.6c-4.9 2.8-7.1 8.6-5.5 14 11.1 35.6 30 67.8 54.7 94.6 3.8 4.1 10 5.1 14.8 2.3l42.6-24.6c17.9 15.4 38.5 27.3 60.8 35.1v49.2c0 5.6 3.9 10.5 9.4 11.7 36.7 8.2 74.3 7.8 109.2 0 5.5-1.2 9.4-6.1 9.4-11.7v-49.2c22.2-7.9 42.8-19.8 60.8-35.1l42.6 24.6c4.9 2.8 11 1.9 14.8-2.3 24.7-26.7 43.6-58.9 54.7-94.6 1.5-5.5-.7-11.3-5.6-14.1zM256 336c-44.1 0-80-35.9-80-80s35.9-80 80-80 80 35.9 80 80-35.9 80-80 80z"/></svg>
<svg class="r" style="left:1455.2px;top:310.9px;width:63px;height:63px;filter:blur(.4px)" viewBox="0 0 63 63"><defs><clipPath id="cb"><circle cx="31.5" cy="31.5" r="31.5"/></clipPath><linearGradient id="sky" x1="0" y1="0" x2="0" y2="1"><stop offset="0" stop-color="#5f8cc4"/><stop offset=".45" stop-color="#a8bcd8"/><stop offset=".5" stop-color="#c4cad8"/></linearGradient></defs><g clip-path="url(#cb)"><rect width="63" height="63" fill="url(#sky)"/><rect x="0" y="30" width="63" height="33" fill="#d2d0d6"/><rect x="0" y="30" width="63" height="3" fill="#e4e2e0"/><path d="M0 46 L15 44 L30 47 L40 63 L0 63 Z" fill="#1f5ab8"/><path d="M9 50 L20 44 L26 63 L16 63 Z" fill="#7a7470"/><path d="M28 63 L40 56 L48 63 Z" fill="#1f4a98"/><ellipse cx="31" cy="27" rx="13" ry="12" fill="#b48a80"/><path d="M15 16 Q16 6 31 6 Q46 6 47 16 Q40 19 31 19 Q22 19 15 16 Z" fill="#161616"/><circle cx="24.4" cy="24.4" r="5" fill="#1e1c1e"/><circle cx="37.8" cy="24.4" r="5" fill="#1e1c1e"/><path d="M19 29 Q31 33 44 29 Q45 50 33 56 Q22 54 18 40 Z" fill="#dcd8d4"/><path d="M26 34 Q31 32 36 34 Q31 36 26 34 Z" fill="#c0a098"/></g></svg>
<div class="r" style="left:1487.8px;top:343.7px;width:36.6px;height:36.6px;border-radius:50%;background:#2d2d2d"></div>
<div class="r" style="left:1491.1px;top:347px;width:30px;height:30px;border-radius:50%;background:#3aacd8"></div>
<svg class="r" style="left:0;top:0;width:1920px;height:1080px" viewBox="0 0 1920 1080"><polyline points="1498.6,362.6 1504.2,367.6 1513.6,358.4" fill="none" stroke="#fff" stroke-width="3.4"/></svg>
<div class="tx" style="left:1530.42px;top:313px;font-size:18.20px;line-height:20px;color:#c7d1d8;font-weight:normal;letter-spacing:-0.171px;font-family:'Liberation Sans',sans-serif;">Terry Hancock</div>
<div class="tx" style="left:1790.72px;top:313px;font-size:17.50px;line-height:20px;color:#c7d1d8;font-weight:normal;letter-spacing:-0.822px;font-family:'Liberation Sans',sans-serif;">4 days ago</div>
<div class="tx" style="left:1529.30px;top:337px;font-size:18.80px;line-height:21px;color:rgba(199,209,216,0.7);font-weight:normal;letter-spacing:-0.264px;font-family:'Liberation Sans',sans-serif;">Follow request accepted</div>
<div class="r" style="left:1437px;top:711px;width:450px;height:400px;border-radius:16px;background:#2d2d2d"></div>
<div class="r" style="left:1437px;top:766px;width:450px;height:1px;background:#424242"></div>
<svg class="ic" style="position:absolute;left:1451.60px;top:726.00px;width:18.20px;height:20.80px;" viewBox="0 0 448 512"><path fill="#c7d1d8" d="M440.667 182.109l7.143-40c1.313-7.355-4.342-14.109-11.813-14.109h-74.81l14.61-81.891C377.109 38.754 371.453 32 363.983 32h-40.632a12 12 0 0 0-11.813 9.891L296.175 128H197.54l14.61-81.891C213.463 38.754 207.807 32 200.336 32h-40.632a12 12 0 0 0-11.813 9.891L132.528 128H53.432a12 12 0 0 0-11.813 9.891l-7.143 40C33.163 185.246 38.818 192 46.289 192h74.81L98.242 320H19.146a12 12 0 0 0-11.813 9.891l-7.143 40C-1.123 377.246 4.532 384 12.003 384h74.81L72.203 465.891C70.89 473.246 76.546 480 84.016 480h40.632a12 12 0 0 0 11.813-9.891L151.825 384h98.634l-14.61 81.891C234.537 473.246 240.193 480 247.663 480h40.632a12 12 0 0 0 11.813-9.891L315.472 384h79.096a12 12 0 0 0 11.813-9.891l7.143-40c1.313-7.355-4.342-14.109-11.813-14.109h-74.81l22.857-128h79.096a12 12 0 0 0 11.813-9.891zM261.889 320h-98.634l22.857-128h98.634l-22.857 128z"/></svg>
<div class="tx" style="left:1478.50px;top:725px;font-size:22.00px;line-height:25px;color:#c7d1d8;font-weight:normal;letter-spacing:-0.918px;font-family:'Liberation Sans',sans-serif;">Trending</div>
<div class="r" style="left:1911px;top:2px;width:9px;height:1078px;background:#cdcdcd"></div>
<div class="r" style="left:0;top:0;width:1920px;height:2px;background:#000"></div>
</body></html>
